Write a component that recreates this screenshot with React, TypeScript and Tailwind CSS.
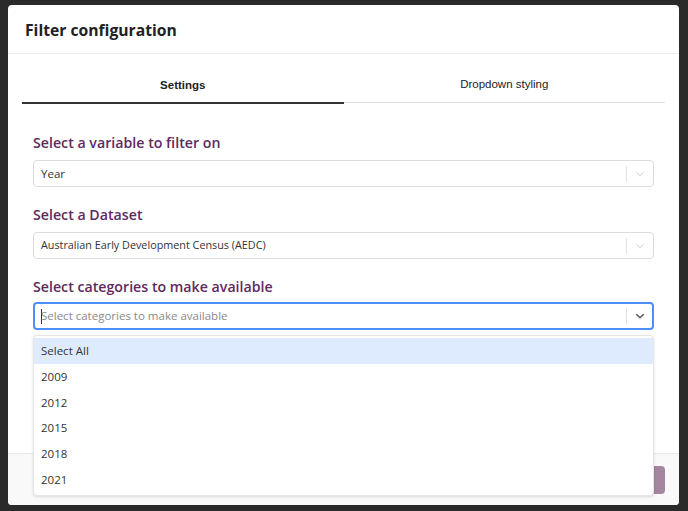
import { useState } from "react";

const years = ["2009", "2012", "2015", "2018", "2021"];

function Chevron({ dark }: { dark?: boolean }) {
  return (
    <svg width="12" height="12" viewBox="0 0 20 20" className={dark ? "text-[#555]" : "text-[#c8c8c8]"}>
      <path
        d="M4.5 7.5 L10 13 L15.5 7.5"
        fill="none"
        stroke="currentColor"
        strokeWidth={dark ? 2.4 : 1.6}
        strokeLinecap="round"
        strokeLinejoin="round"
      />
    </svg>
  );
}

function SelectBox({ value, small }: { value: string; small?: boolean }) {
  return (
    <div className="flex h-[27px] items-center rounded-[4px] border border-[#dcdcdc] bg-white">
      <div className={`flex-1 pl-[7px] text-[#333] ${small ? "text-[10.8px]" : "text-[11.5px]"}`}>{value}</div>
      <div className="h-[16px] w-px bg-[#e2e2e2]" />
      <div className="flex w-[26px] justify-center">
        <Chevron />
      </div>
    </div>
  );
}

export default function App() {
  const [tab, setTab] = useState<"settings" | "styling">("settings");

  return (
    <div className="h-[511px] w-full overflow-hidden bg-[#2a2a2a] pl-[8px] pt-[5px] font-['Open_Sans',sans-serif]">
      {/* modal */}
      <div className="relative flex h-[500px] w-[671px] flex-col rounded-[4px] bg-white">
        <div className="flex h-[49px] shrink-0 items-center border-b border-[#ececec] px-[17px] pt-[3px]">
          <h2 className="text-[15.7px] font-bold text-[#222]">Filter configuration</h2>
        </div>

        <div className="flex-1 px-[14px]">
          {/* tabs */}
          <div className="flex pt-[15px] font-['Liberation_Sans',Arial,sans-serif] text-[11.5px] text-[#222]">
            <button
              onClick={() => setTab("settings")}
              className={`h-[35px] flex-1 ${tab === "settings" ? "border-b-2 border-[#333] font-bold" : "border-b border-[#e0e0e0] pb-px"}`}
            >
              Settings
            </button>
            <button
              onClick={() => setTab("styling")}
              className={`h-[35px] flex-1 ${tab === "styling" ? "border-b-2 border-[#333] font-bold" : "border-b-2 border-b-transparent"}`}
            >
              <span className="relative top-[-1px]">Dropdown styling</span>
            </button>
          </div>
          <div className="-mt-[2px] ml-[321px] h-px bg-[#e0e0e0]" />

          <div className="px-[11px] pt-[30px]">
            <label className="block text-[14.2px] font-semibold leading-[20px] text-[#5e2a60]">
              Select a variable to filter on
            </label>
            <div className="mt-[7px]">
              <SelectBox value="Year" />
            </div>

            <label className="mt-[18px] block text-[14.2px] font-semibold leading-[20px] text-[#5e2a60]">
              Select a Dataset
            </label>
            <div className="mt-[7px]">
              <SelectBox value="Australian Early Development Census (AEDC)" small />
            </div>

            <label className="mt-[18px] block text-[14.2px] font-semibold leading-[20px] text-[#5e2a60]">
              Select categories to make available
            </label>
            <div className="relative mt-[5px]">
              <div className="flex h-[28px] items-center rounded-[4px] border-2 border-[#4a90f7] bg-white">
                <div className="flex flex-1 items-center pl-[6px] text-[11.5px] text-[#8a8a8a]">
                  <span className="mr-[-1px] h-[15px] w-px bg-[#333]" />
                  Select categories to make available
                </div>
                <div className="h-[16px] w-px bg-[#e2e2e2]" />
                <div className="flex w-[25px] justify-center">
                  <Chevron dark />
                </div>
              </div>

              {/* open menu, over the footer */}
              <div className="absolute left-0 right-0 top-[33px] z-10 rounded-[4px] border border-[#e6e6e6] bg-white pb-[3px] pt-[2px] text-[11.5px] text-[#333] shadow-[0_1px_3px_rgba(0,0,0,0.12)]">
                <div className="flex h-[25.7px] items-center bg-[#deebff] pl-[7px]">Select All</div>
                {years.map((y) => (
                  <div key={y} className="flex h-[25.7px] items-center pl-[7px]">
                    {y}
                  </div>
                ))}
              </div>
            </div>
          </div>
        </div>

        {/* footer */}
        <div className="flex h-[52px] shrink-0 items-center justify-end rounded-b-[4px] border-t border-[#e9e9e9] bg-[#f9f9fa] px-[14px]">
          <button className="h-[28px] w-[80px] rounded-[4px] bg-[#a5869f] text-[13px] text-white">
            Save
          </button>
        </div>
      </div>
    </div>
  );
}
